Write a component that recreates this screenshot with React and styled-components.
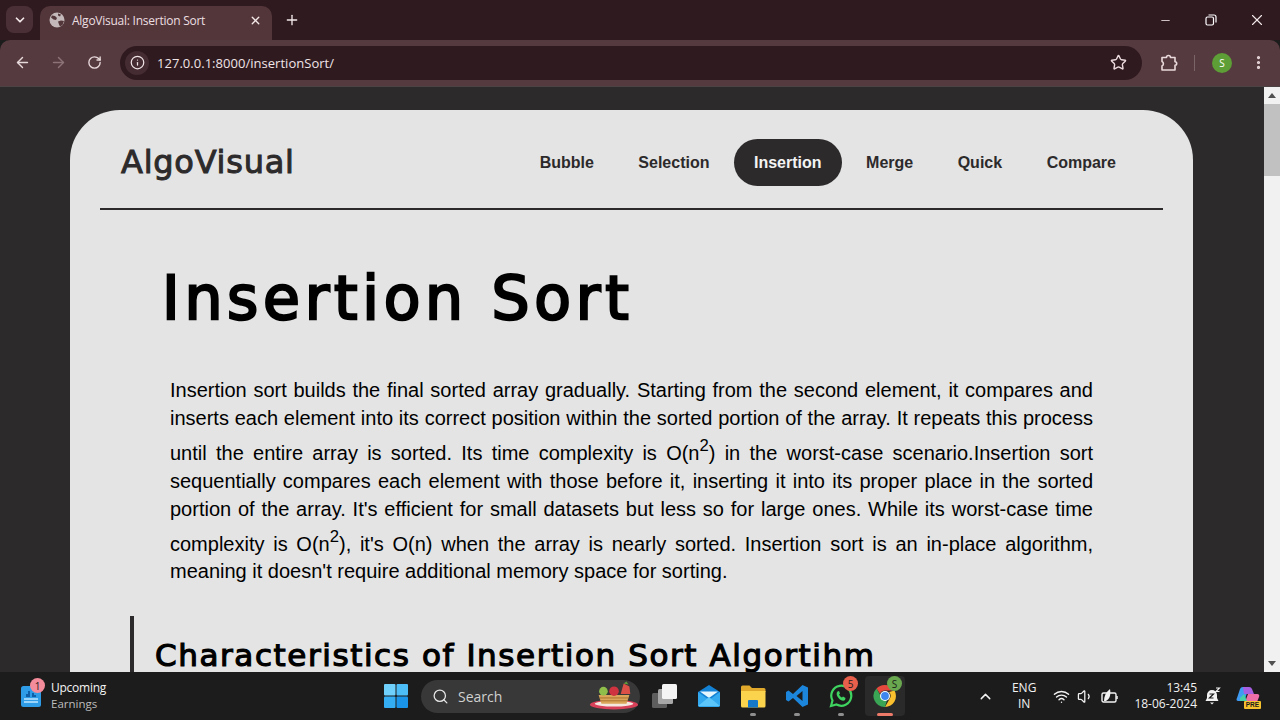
import styled, { createGlobalStyle } from 'styled-components';
import { ArrowLeft, ArrowRight, RotateCw, Info, Star, EllipsisVertical, X, Plus, ChevronDown, ChevronUp, Minus, Search, Wifi, Volume1 } from 'lucide-react';

const GlobalStyle = createGlobalStyle`
  html, body {
    margin: 0;
    padding: 0;
    height: 720px;
    overflow: hidden;
    background: #1c1c1c;
  }
  * {
    box-sizing: border-box;
  }
`;

const DISPLAY_FONT = `"DejaVu Sans", sans-serif`;
const UI_FONT = `"Open Sans", "Noto Sans", sans-serif`;
const BODY_FONT = `"Liberation Sans", Arial, sans-serif`;

const navLinks = ['Bubble', 'Selection', 'Insertion', 'Merge', 'Quick', 'Compare'];

function App() {
  return (
    <Screen>
      <GlobalStyle />
      <TabStrip>
        <TabSearch>
          <ChevronDown size={14} strokeWidth={3} />
        </TabSearch>
        <Tab>
          <Favicon viewBox="0 0 16 16">
            <circle cx="8" cy="8" r="7.5" fill="#c4b8ba" />
            <path d="M3 3.5l3 .5 2 2-1 2-2.500-.5-2.500-2zM9 9.500l3-1 3 .5-1.500 4-2.500 1.500-1-2zM9 1.500l3 1-1 2-2-1z" fill="#533639" />
          </Favicon>
          <TabTitle>AlgoVisual: Insertion Sort</TabTitle>
          <TabClose>
            <X size={13} strokeWidth={2.5} />
          </TabClose>
        </Tab>
        <NewTab>
          <Plus size={16} strokeWidth={2} />
        </NewTab>
        <WindowControls>
          <WindowButton>
            <Minus size={13} strokeWidth={1.5} />
          </WindowButton>
          <WindowButton>
            <svg width="12" height="12" viewBox="0 0 12 12" fill="none" stroke="#fff" strokeWidth="1.2">
              <rect x="1" y="3" width="7.500" height="8" rx="1.500" />
              <path d="M3.500 1h5.500a2 2 0 0 1 2 2v5.500" />
            </svg>
          </WindowButton>
          <WindowButton>
            <X size={18} strokeWidth={1.5} />
          </WindowButton>
        </WindowControls>
      </TabStrip>

      <Toolbar>
        <NavIcon>
          <ArrowLeft size={17} strokeWidth={2} />
        </NavIcon>
        <NavIcon $dim>
          <ArrowRight size={17} strokeWidth={2} />
        </NavIcon>
        <NavIcon>
          <RotateCw size={15} strokeWidth={2.2} />
        </NavIcon>
        <AddressBar>
          <SiteInfo>
            <Info size={15} strokeWidth={2} />
          </SiteInfo>
          <Url>127.0.0.1:8000/insertionSort/</Url>
          <Star size={17} strokeWidth={2} color="#eadadd" />
        </AddressBar>
        <ToolbarEnd>
          <svg width="18" height="18" viewBox="0 0 18 18" fill="none" stroke="#eadadd" strokeWidth="1.600" strokeLinejoin="round">
            <path d="M2 3.500h4.500a2 2 0 0 1 4 0H15v4.300a1.700 1.700 0 0 1 0 3.400V16H2v-4a2.500 2.500 0 0 0 0-4.500z" />
          </svg>
          <ToolbarDivider />
          <Avatar>S</Avatar>
          <EllipsisVertical size={17} strokeWidth={2.5} color="#eadadd" />
        </ToolbarEnd>
      </Toolbar>

      <Viewport>
        <Page>
          <Card>
            <Header>
              <Logo>AlgoVisual</Logo>
              <Nav>
                {navLinks.map((link) => (
                  <NavLink key={link} $active={link === 'Insertion'}>
                    {link}
                  </NavLink>
                ))}
              </Nav>
            </Header>
            <Title>Insertion Sort</Title>
            <Description>
              Insertion sort builds the final sorted array gradually. Starting from the second element, it compares
              and inserts each element into its correct position within the sorted portion of the array. It repeats
              this process until the entire array is sorted. Its time complexity is O(n<sup>2</sup>) in the worst-case
              scenario.Insertion sort sequentially compares each element with those before it, inserting it into its
              proper place in the sorted portion of the array. It's efficient for small datasets but less so for large
              ones. While its worst-case time complexity is O(n<sup>2</sup>), it's O(n) when the array is nearly
              sorted. Insertion sort is an in-place algorithm, meaning it doesn't require additional memory space for
              sorting.
            </Description>
            <Section>
              <SectionTitle>Characteristics of Insertion Sort Algortihm</SectionTitle>
            </Section>
          </Card>
        </Page>
        <Scrollbar>
          <ScrollArrow />
          <ScrollThumb />
          <ScrollTrack />
          <ScrollArrow $down />
        </Scrollbar>
      </Viewport>

      <Taskbar>
        <Widget>
          <WidgetIcon>
            <svg width="22" height="24" viewBox="0 0 22 24">
              <rect x="1" y="2" width="20" height="21" rx="2.500" fill="#2f9ce8" />
              <path d="M4 13h2v-3h2V7h2v6h2v-4h2v2h2v2z" fill="#0f5fa8" />
              <path d="M4 15h14M4 18h14" stroke="#bfe6ff" strokeWidth="1.500" />
            </svg>
            <WidgetBadge>1</WidgetBadge>
          </WidgetIcon>
          <WidgetText>
            <WidgetTitle>Upcoming</WidgetTitle>
            <WidgetSub>Earnings</WidgetSub>
          </WidgetText>
        </Widget>

        <TaskCenter>
          <svg width="24" height="24" viewBox="0 0 24 24">
            <rect x="0" y="0" width="11.500" height="11.500" rx="1" fill="#6fd0fb" />
            <rect x="12.500" y="0" width="11.500" height="11.500" rx="1" fill="#4cbdf6" />
            <rect x="0" y="12.500" width="11.500" height="11.500" rx="1" fill="#35adf2" />
            <rect x="12.500" y="12.500" width="11.500" height="11.500" rx="1" fill="#1a94e8" />
          </svg>
          <SearchBox>
            <Search size={17} strokeWidth={1.8} color="#e6e6e6" />
            <SearchLabel>Search</SearchLabel>
            <SearchArt viewBox="0 0 52 30">
              <ellipse cx="26" cy="24" rx="25" ry="5" fill="#d8405a" />
              <ellipse cx="26" cy="23" rx="20" ry="3" fill="#f3e7df" />
              <path d="M10 14h32l-3 9H13z" fill="#dba659" />
              <path d="M11 17h30M12 20h28" stroke="#a8702f" strokeWidth="1" />
              <circle cx="15" cy="10" r="4.500" fill="#8fbf4a" />
              <circle cx="26" cy="10" r="5" fill="#cf3340" />
              <path d="M33 13l3-11 6 3 1 8z" fill="#dc5048" />
              <path d="M36 2l3-2 2 3z" fill="#5f9e39" />
            </SearchArt>
          </SearchBox>
          <TaskIcon>
            <svg width="26" height="24" viewBox="0 0 26 24">
              <rect x="0" y="9" width="15" height="15" rx="1.500" fill="#5e5e5e" />
              <rect x="6" y="5" width="15" height="15" rx="1.500" fill="#a8a8a8" />
              <rect x="10" y="0" width="15" height="15" rx="1.500" fill="#f5f5f5" />
            </svg>
          </TaskIcon>
          <TaskIcon>
            <svg width="24" height="24" viewBox="0 0 24 24">
              <path d="M1 8l11-7 11 7v13a2 2 0 0 1-2 2H3a2 2 0 0 1-2-2z" fill="#1482d4" />
              <path d="M1 8l11 8 11-8v13a2 2 0 0 1-2 2H3a2 2 0 0 1-2-2z" fill="#33a9ef" />
              <path d="M3 7.500h18L12 14z" fill="#e6f6ff" />
              <path d="M1 22l11-9 11 9z" fill="#5cc6fa" />
            </svg>
          </TaskIcon>
          <TaskIcon $open>
            <svg width="26" height="24" viewBox="0 0 26 24">
              <path d="M1 3a1.500 1.500 0 0 1 1.500-1.500h7L12 4h12a1.500 1.500 0 0 1 1.500 1.500V8H1z" fill="#e0a92b" />
              <path d="M1 7h24.500v15a1.500 1.500 0 0 1-1.500 1.500H2.500A1.500 1.500 0 0 1 1 22z" fill="#fbd34d" />
              <path d="M8 17a1 1 0 0 1 1-1h8a1 1 0 0 1 1 1v6.500H8z" fill="#1678c8" />
            </svg>
          </TaskIcon>
          <TaskIcon $open>
            <svg width="24" height="24" viewBox="0 0 24 24">
              <path d="M17.500 1L8 10 3.500 6.500 1 8v8l2.500 1.500L8 14l9.500 9 5.500-2.500V3.500zM17.500 7v10l-6-5z" fill="#1c86dd" />
            </svg>
          </TaskIcon>
          <TaskIcon $open>
            <svg width="24" height="24" viewBox="0 0 24 24" fill="none">
              <path d="M2 22l1.500-5.500A10 10 0 1 1 7.500 20.500z" stroke="#3fd45f" strokeWidth="2.200" />
              <path d="M8.500 7.500c-1.500 1.500-1 4 1 6.500s5 3.500 6.500 2l.5-2-2.500-1.500-1 1c-1.500-.5-2.500-2-3-3l1-1L10 7z" fill="#3fd45f" />
            </svg>
            <TaskBadge $color="#e8604c">5</TaskBadge>
          </TaskIcon>
          <TaskIcon $open $active>
            <svg width="24" height="24" viewBox="0 0 24 24">
              <path d="M12 1a11 11 0 0 1 9.500 5.500H12a5.500 5.500 0 0 0-5 3.200L3.500 4.500A11 11 0 0 1 12 1z" fill="#e5483c" />
              <path d="M21.500 6.500A11 11 0 0 1 12 23l4.700-8.200A5.500 5.500 0 0 0 16 8z" fill="#fbc02d" />
              <path d="M12 23A11 11 0 0 1 3.500 4.500L8 12.500a5.500 5.500 0 0 0 6 3.500z" fill="#3aa655" />
              <circle cx="12" cy="12" r="5" fill="#fff" />
              <circle cx="12" cy="12" r="3.900" fill="#3e86f0" />
            </svg>
            <TaskBadge $color="#6aa84f">S</TaskBadge>
          </TaskIcon>
        </TaskCenter>

        <Tray>
          <ChevronUp size={17} strokeWidth={2} color="#f2f2f2" />
          <Language>
            <span>ENG</span>
            <span>IN</span>
          </Language>
          <TrayIcons>
            <Wifi size={17} strokeWidth={2} color="#f2f2f2" />
            <Volume1 size={17} strokeWidth={1.8} color="#f2f2f2" />
            <svg width="18" height="16" viewBox="0 0 18 16" fill="none">
              <rect x="1" y="5" width="14" height="9" rx="1.500" stroke="#f2f2f2" strokeWidth="1.400" />
              <path d="M16 8v3" stroke="#f2f2f2" strokeWidth="1.500" />
              <path d="M3 13c0-5 2-9 6-12 1 5 0 10-4 12z" fill="#f2f2f2" />
            </svg>
          </TrayIcons>
          <Clock>
            <span>13:45</span>
            <span>18-06-2024</span>
          </Clock>
          <svg width="16" height="18" viewBox="0 0 16 18">
            <path d="M7 3a5 5 0 0 0-5 5v3l-1.500 3h13L12 11V8a5 5 0 0 0-5-5z" fill="#f2f2f2" />
            <path d="M5 15.500h4L7 17.500z" fill="#f2f2f2" />
            <path d="M4.500 7h4l-4 4h4" stroke="#1c1c1c" strokeWidth="1.200" fill="none" />
            <path d="M11 1h3.500L11 4.500h3.500" stroke="#f2f2f2" strokeWidth="1.100" fill="none" />
          </svg>
          <Copilot>
            <svg width="24" height="20" viewBox="0 0 24 20">
              <path d="M7 1h6l-4 12a3 3 0 0 1-3 2H2a2 2 0 0 1-1-3l3-9a3 3 0 0 1 3-2z" fill="#3f9bf2" />
              <path d="M7 1h6a3 3 0 0 1 3 2l2 5H8z" fill="#a65fe0" />
              <path d="M12 8h9a2 2 0 0 1 2 3l-2 5a3 3 0 0 1-3 2h-6a3 3 0 0 1-3-2z" fill="#ee6fa8" />
              <path d="M4 12l4-4 3 7H4z" fill="#47cfa8" />
            </svg>
            <PreTag>PRE</PreTag>
          </Copilot>
        </Tray>
      </Taskbar>
    </Screen>
  );
}

const Screen = styled.div`
  width: 1280px;
  height: 720px;
  display: flex;
  flex-direction: column;
  overflow: hidden;
  font-family: ${UI_FONT};
`;

const TabStrip = styled.div`
  height: 40px;
  flex: none;
  display: flex;
  align-items: flex-end;
  padding-left: 6px;
  background: #2f1a20;
  color: #f4e9ea;
`;

const TabSearch = styled.div`
  width: 27px;
  height: 27px;
  margin: 0 7px 7px 0;
  display: flex;
  align-items: center;
  justify-content: center;
  border-radius: 8px;
  background: #4a3036;
`;

const Tab = styled.div`
  width: 232px;
  height: 34px;
  display: flex;
  align-items: center;
  padding: 0 9px 6px;
  border-radius: 10px 10px 0 0;
  background: #533639;
`;

const Favicon = styled.svg`
  width: 16px;
  height: 16px;
  margin-right: 7px;
`;

const TabTitle = styled.span`
  flex: 1;
  font-size: 12px;
  letter-spacing: -0.25px;
  color: #ecdfe1;
`;

const TabClose = styled.span`
  display: flex;
  margin-right: 1px;
`;

const NewTab = styled.div`
  width: 40px;
  height: 40px;
  display: flex;
  align-items: center;
  justify-content: center;
`;

const WindowControls = styled.div`
  margin-left: auto;
  display: flex;
  height: 40px;
`;

const WindowButton = styled.div`
  width: 46px;
  display: flex;
  align-items: center;
  justify-content: center;
`;

const Toolbar = styled.div`
  height: 47px;
  flex: none;
  display: flex;
  align-items: center;
  padding: 0 0 1px 4px;
  background: #553a3f;
  border-bottom: 1px solid #4c4345;
  border-radius: 10px 10px 0 0;
`;

const NavIcon = styled.div`
  width: 36px;
  display: flex;
  justify-content: center;
  color: ${(props) => (props.$dim ? '#8c7378' : '#e8d9dc')};
`;

const AddressBar = styled.div`
  width: 1022px;
  height: 34px;
  margin-left: 8px;
  display: flex;
  align-items: center;
  padding: 0 15px 0 5px;
  border-radius: 17px;
  background: #2f1a20;
  color: #f0e4e6;
`;

const SiteInfo = styled.div`
  width: 24px;
  height: 24px;
  display: flex;
  align-items: center;
  justify-content: center;
  border-radius: 50%;
  background: #452c32;
`;

const Url = styled.span`
  flex: 1;
  margin-left: 8px;
  font-size: 13px;
  letter-spacing: 0.03px;
  color: #f0e4e6;
`;

const ToolbarEnd = styled.div`
  flex: 1;
  display: flex;
  align-items: center;
  padding-left: 18px;
`;

const ToolbarDivider = styled.div`
  width: 1px;
  height: 16px;
  margin: 0 17px 0 16px;
  background: #7a6468;
`;

const Avatar = styled.div`
  width: 20px;
  height: 20px;
  margin-right: 18px;
  display: flex;
  align-items: center;
  justify-content: center;
  border-radius: 50%;
  background: #5d9e36;
  color: #fff;
  font-size: 10px;
`;

const Viewport = styled.div`
  flex: 1;
  min-height: 0;
  display: flex;
  background: #2c2a2b;
`;

const Page = styled.main`
  flex: 1;
  min-width: 0;
  overflow: hidden;
  padding: 23px 71px 0 70px;
`;

const Card = styled.div`
  min-height: 700px;
  border-radius: 50px 50px 0 0;
  background: #e4e4e4;
`;

const Header = styled.header`
  height: 100px;
  margin: 0 30px;
  display: flex;
  justify-content: space-between;
  align-items: flex-start;
  padding: 29px 27px 0 21px;
  border-bottom: 2px solid #2c2a2b;
`;

const Logo = styled.div`
  margin-top: 3px;
  font-family: ${DISPLAY_FONT};
  font-size: 32px;
  line-height: 40px;
  letter-spacing: 0.75px;
  -webkit-text-stroke: 1px #2c2a2b;
  color: #2c2a2b;
`;

const Nav = styled.nav`
  display: flex;
  gap: 4.5px;
`;

const NavLink = styled.a`
  padding: 0 20px;
  height: 47px;
  display: flex;
  align-items: center;
  border-radius: 24px;
  font-family: ${BODY_FONT};
  font-size: 16px;
  font-weight: 700;
  color: ${(props) => (props.$active ? '#f4f4f4' : '#2c2a2b')};
  background: ${(props) => (props.$active ? '#2c2a2b' : 'transparent')};
`;

const Title = styled.h1`
  margin: 52px 0 0 92px;
  font-family: ${DISPLAY_FONT};
  font-size: 60px;
  font-weight: 400;
  line-height: 72px;
  letter-spacing: 4.7px;
  -webkit-text-stroke: 2.4px #000;
  color: #000;
`;

const Description = styled.p`
  margin: 42px 100px 0;
  font-family: ${BODY_FONT};
  font-size: 20px;
  line-height: 28px;
  text-align: justify;
  color: #000;

  sup {
    vertical-align: 8.7px;
    font-size: smaller;
  }
`;

const Section = styled.section`
  margin: 31px 0 0 60px;
  padding: 19px 0 40px 21px;
  border-left: 4px solid #2c2a2b;
`;

const SectionTitle = styled.h2`
  margin: 0;
  font-family: ${DISPLAY_FONT};
  font-size: 31px;
  font-weight: 400;
  line-height: 40px;
  letter-spacing: 1.58px;
  -webkit-text-stroke: 1.2px #000;
  color: #000;
`;

const Scrollbar = styled.div`
  width: 16px;
  flex: none;
  display: flex;
  flex-direction: column;
  background: #f1f1f1;
`;

const ScrollArrow = styled.div`
  height: 17px;
  display: flex;
  align-items: center;
  justify-content: center;

  &::before {
    content: '';
    border-left: 4px solid transparent;
    border-right: 4px solid transparent;
    border-${(props) => (props.$down ? 'top' : 'bottom')}: 5px solid #505050;
  }
`;

const ScrollThumb = styled.div`
  height: 72px;
  background: #c1c1c1;
`;

const ScrollTrack = styled.div`
  flex: 1;
`;

const Taskbar = styled.footer`
  height: 48px;
  flex: none;
  display: flex;
  align-items: center;
  position: relative;
  background: #1c1c1c;
  color: #f2f2f2;
`;

const Widget = styled.div`
  width: 384px;
  display: flex;
  align-items: center;
  padding-left: 20px;
`;

const WidgetIcon = styled.div`
  position: relative;
  display: flex;
  margin-right: 9px;
`;

const WidgetBadge = styled.span`
  position: absolute;
  top: -6px;
  left: 10px;
  width: 15px;
  height: 15px;
  display: flex;
  align-items: center;
  justify-content: center;
  border-radius: 50%;
  background: #f58c9b;
  color: #2a1a1c;
  font-size: 10px;
`;

const WidgetText = styled.div`
  display: flex;
  flex-direction: column;
  line-height: 16px;
`;

const WidgetTitle = styled.span`
  font-size: 12px;
  letter-spacing: -0.25px;
  color: #f4f4f4;
`;

const WidgetSub = styled.span`
  font-size: 11.5px;
  color: #bdbdbd;
`;

const TaskCenter = styled.div`
  display: flex;
  align-items: center;
`;

const SearchBox = styled.div`
  width: 219px;
  height: 33px;
  margin: 0 3px 0 13px;
  display: flex;
  align-items: center;
  padding: 0 1px 0 11px;
  border-radius: 17px;
  background: #383838;
`;

const SearchLabel = styled.span`
  flex: 1;
  margin-left: 9px;
  font-size: 14px;
  color: #d0d0d0;
`;

const SearchArt = styled.svg`
  width: 50px;
  height: 30px;
`;

const TaskIcon = styled.div`
  position: relative;
  width: ${(props) => (props.$active ? '40px' : '44px')};
  height: 40px;
  margin-left: ${(props) => (props.$active ? '2px' : '0')};
  display: flex;
  align-items: center;
  justify-content: center;
  border-radius: 4px;
  background: ${(props) => (props.$active ? '#2a2a2a' : 'transparent')};

  &::after {
    content: '';
    display: ${(props) => (props.$open ? 'block' : 'none')};
    position: absolute;
    bottom: 0;
    left: 50%;
    transform: translateX(-50%);
    width: ${(props) => (props.$active ? '16px' : '6px')};
    height: 3px;
    border-radius: 2px;
    background: ${(props) => (props.$active ? '#ee7a6a' : '#8f8f8f')};
  }
`;

const TaskBadge = styled.span`
  position: absolute;
  top: 0;
  right: ${(props) => (props.$color === '#6aa84f' ? '3px' : '5px')};
  width: 15px;
  height: 15px;
  display: flex;
  align-items: center;
  justify-content: center;
  border-radius: 50%;
  background: ${(props) => props.$color};
  color: #1c1c1c;
  font-size: 10px;
`;

const Tray = styled.div`
  margin-left: auto;
  display: flex;
  align-items: center;
  padding-right: 20px;
`;

const Language = styled.div`
  margin-left: 18px;
  display: flex;
  flex-direction: column;
  align-items: center;
  font-size: 12px;
  line-height: 16px;
`;

const TrayIcons = styled.div`
  margin: 0 15px 0 17px;
  display: flex;
  align-items: center;
  gap: 7px;
`;

const Clock = styled.div`
  margin-right: 8px;
  display: flex;
  flex-direction: column;
  align-items: flex-end;
  font-size: 12px;
  line-height: 16px;
`;

const Copilot = styled.div`
  position: relative;
  width: 24px;
  margin-left: 15px;
  display: flex;
`;

const PreTag = styled.span`
  position: absolute;
  right: -1px;
  bottom: -3px;
  padding: 0 2px;
  border-radius: 1px;
  background: #f6c22d;
  color: #1c1c1c;
  font-family: ${BODY_FONT};
  font-size: 6.5px;
  font-weight: 700;
  line-height: 8px;
`;

export default App;
